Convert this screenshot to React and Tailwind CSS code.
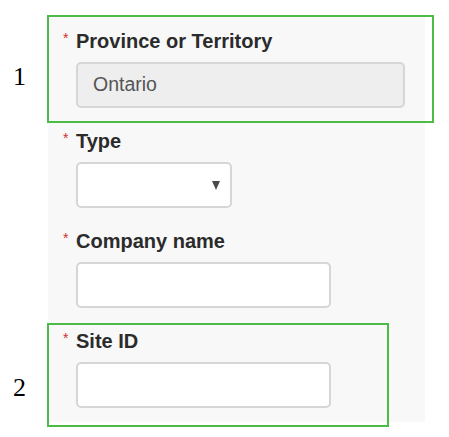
import React from "react";

const Field = ({ label, children, last }) => (
  <div className={last ? "" : "mb-[21px]"}>
    <div className="flex h-[24px] items-start leading-[24px]">
      <span className="-ml-[14px] w-[14px] pl-[1px] text-[14px] leading-[18px] text-[#c9302c]">*</span>
      <span className="text-[20px] font-bold text-[#2b2b2b]">{label}</span>
    </div>
    <div className="mt-[9px]">{children}</div>
  </div>
);

const App = () => {
  return (
    <div
      className="relative h-[437px] w-[449px] overflow-hidden bg-white"
      style={{ fontFamily: '"Liberation Sans", Arial, sans-serif' }}
    >
      <div className="ml-[48px] mt-[15px] w-[377px] bg-[#f8f8f8] pb-[14px] pl-[28px] pt-[14px]">
        <Field label="Province or Territory">
          <div className="flex h-[46px] w-[329px] items-center rounded-[5px] border-2 border-[#d6d6d6] bg-[#eeeeee] pl-[15px] text-[19.5px] text-[#555]">
            Ontario
          </div>
        </Field>
        <Field label="Type">
          <div className="flex h-[46px] w-[156px] items-center justify-end rounded-[5px] border-2 border-[#d6d6d6] bg-white pr-[10px]">
            <svg width="8" height="9" viewBox="0 0 8 9">
              <polygon points="0,0 8,0 4,9" fill="#4a4a4a" />
            </svg>
          </div>
        </Field>
        <Field label="Company name">
          <div className="h-[46px] w-[255px] rounded-[5px] border-2 border-[#d6d6d6] bg-white" />
        </Field>
        <Field label="Site ID" last>
          <div className="h-[46px] w-[255px] rounded-[5px] border-2 border-[#d6d6d6] bg-white" />
        </Field>
      </div>

      {/* annotation frames */}
      <div className="absolute left-[47px] top-[15px] h-[108px] w-[387px] border-2 border-[#4cbb47]" />
      <div className="absolute left-[47px] top-[323px] h-[104px] w-[342px] border-2 border-[#4cbb47]" />
      <div
        className="absolute left-[13px] top-[62px] text-[26px] leading-[30px] text-black"
        style={{ fontFamily: '"Liberation Serif", "Times New Roman", serif' }}
      >
        1
      </div>
      <div
        className="absolute left-[13px] top-[373px] text-[26px] leading-[30px] text-black"
        style={{ fontFamily: '"Liberation Serif", "Times New Roman", serif' }}
      >
        2
      </div>
    </div>
  );
};

export default App;
